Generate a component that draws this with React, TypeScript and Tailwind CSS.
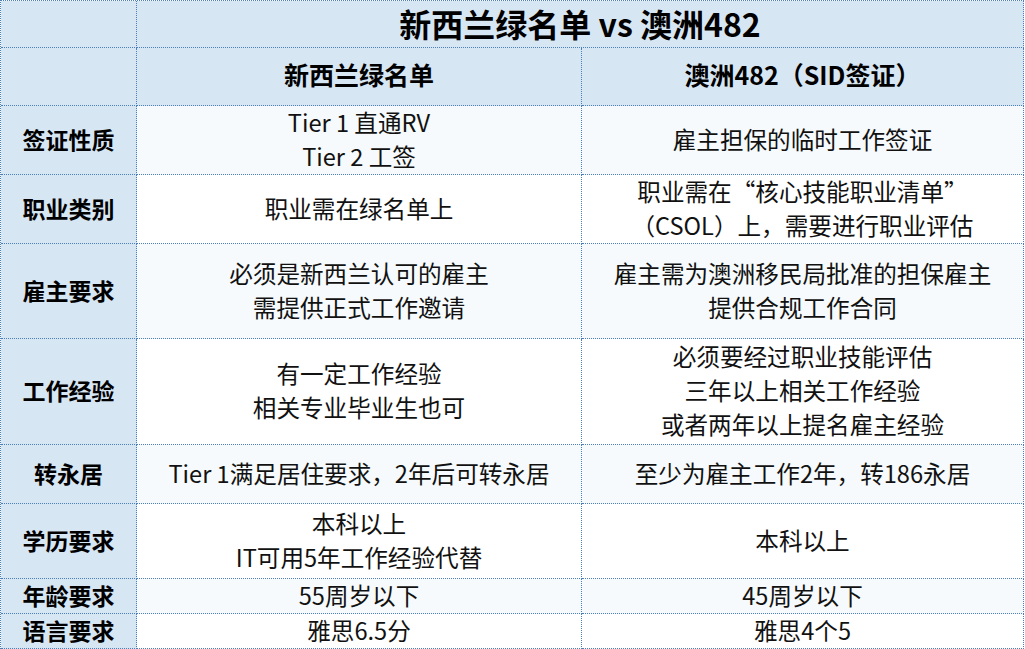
import React from 'react';

interface Row {
  label: string;
  nz: string[];
  au: string[];
  height: string;
  shaded: boolean;
}

const rows: Row[] = [
  { label: '签证性质', nz: ['Tier 1 直通RV', 'Tier 2 工签'], au: ['雇主担保的临时工作签证'], height: 'h-[69px]', shaded: true },
  { label: '职业类别', nz: ['职业需在绿名单上'], au: ['职业需在“核心技能职业清单”', '（CSOL）上，需要进行职业评估'], height: 'h-[69px]', shaded: false },
  { label: '雇主要求', nz: ['必须是新西兰认可的雇主', '需提供正式工作邀请'], au: ['雇主需为澳洲移民局批准的担保雇主', '提供合规工作合同'], height: 'h-[95px]', shaded: true },
  { label: '工作经验', nz: ['有一定工作经验', '相关专业毕业生也可'], au: ['必须要经过职业技能评估', '三年以上相关工作经验', '或者两年以上提名雇主经验'], height: 'h-[106px]', shaded: false },
  { label: '转永居', nz: ['Tier 1满足居住要求，2年后可转永居'], au: ['至少为雇主工作2年，转186永居'], height: 'h-[59px]', shaded: true },
  { label: '学历要求', nz: ['本科以上', 'IT可用5年工作经验代替'], au: ['本科以上'], height: 'h-[75px]', shaded: false },
  { label: '年龄要求', nz: ['55周岁以下'], au: ['45周岁以下'], height: 'h-[35px]', shaded: true },
  { label: '语言要求', nz: ['雅思6.5分'], au: ['雅思4个5'], height: 'h-[35px]', shaded: false },
];

const cell = 'border-r border-b border-dotted border-[#4a7ebd] flex flex-col items-center justify-center text-center';

export default function App() {
  return (
    <div
      className="w-[1024px] bg-white text-[#111] border-t border-l border-dotted border-[#4a7ebd]"
      style={{ fontFamily: '"Noto Sans CJK SC", "Noto Sans", sans-serif' }}
    >
      <div className="grid grid-cols-[136px_445px_442px]">
        <div className={`${cell} h-[47px] bg-[#d7e6f3]`} />
        <div className={`${cell} col-span-2 h-[47px] bg-[#d7e6f3] text-[32px] font-bold text-black leading-[45px] pb-[1px]`}>
          新西兰绿名单 vs 澳洲482
        </div>

        <div className={`${cell} h-[58px] bg-[#d7e6f3]`} />
        <div className={`${cell} h-[58px] bg-[#d7e6f3] text-[25px] font-bold text-black pb-[3px]`}>新西兰绿名单</div>
        <div className={`${cell} h-[58px] bg-[#d7e6f3] text-[25px] font-bold text-black pb-[3px]`}>澳洲482（SID签证）</div>

        {rows.map((r) => {
          const bg = r.shaded ? 'bg-[#f6fafc]' : 'bg-white';
          return (
            <React.Fragment key={r.label}>
              <div className={`${cell} ${r.height} bg-[#d7e6f3] text-[23px] font-bold text-black leading-[34px] pb-[3px]`}>
                {r.label}
              </div>
              <div className={`${cell} ${r.height} ${bg} text-[23.6px] leading-[34px] pb-[3px]`}>
                {r.nz.map((t) => (
                  <div key={t}>{t}</div>
                ))}
              </div>
              <div className={`${cell} ${r.height} ${bg} text-[23.6px] leading-[34px] pb-[3px]`}>
                {r.au.map((t) => (
                  <div key={t}>{t}</div>
                ))}
              </div>
            </React.Fragment>
          );
        })}
      </div>
    </div>
  );
}
